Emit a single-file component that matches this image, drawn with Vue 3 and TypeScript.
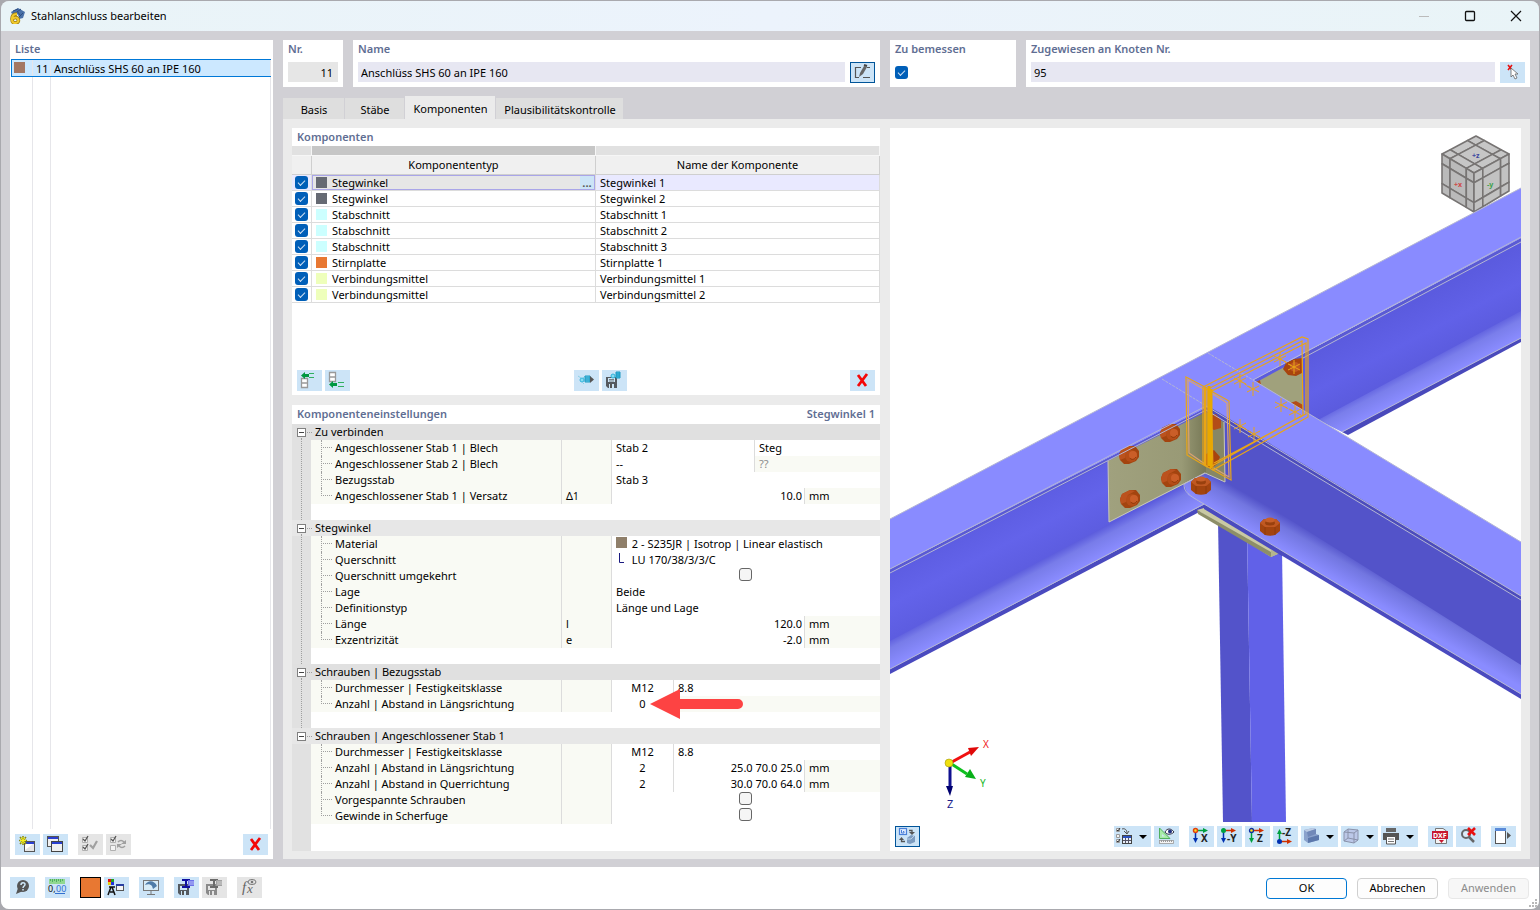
<script setup lang="ts">
import { ref } from 'vue'

type Point = [number, number]

interface Component {
  type: string
  name: string
  color: string
  on: boolean
}

interface Cell {
  text?: string
  kind: 'text' | 'half' | 'count' | 'number' | 'unit' | 'check' | 'muted' | 'fill' | 'section'
  swatch?: string
}

interface Row {
  label: string
  symbol?: string
  sub?: string
  cells: Cell[]
  arrow?: boolean
}

interface Group {
  title: string
  rows: Row[]
}

const tabs = ['Basis', 'Stäbe', 'Komponenten', 'Plausibilitätskontrolle']
const activeTab = ref('Komponenten')
const connectionName = ref('Anschlüss SHS 60 an IPE 160')
const nodes = ref('95')
const designed = ref(true)

const components = ref<Component[]>([
  { type: 'Stegwinkel', name: 'Stegwinkel 1', color: '#666a73', on: true },
  { type: 'Stegwinkel', name: 'Stegwinkel 2', color: '#666a73', on: true },
  { type: 'Stabschnitt', name: 'Stabschnitt 1', color: '#ccffff', on: true },
  { type: 'Stabschnitt', name: 'Stabschnitt 2', color: '#ccffff', on: true },
  { type: 'Stabschnitt', name: 'Stabschnitt 3', color: '#ccffff', on: true },
  { type: 'Stirnplatte', name: 'Stirnplatte 1', color: '#e87832', on: true },
  { type: 'Verbindungsmittel', name: 'Verbindungsmittel 1', color: '#eeffbb', on: true },
  { type: 'Verbindungsmittel', name: 'Verbindungsmittel 2', color: '#eeffbb', on: true },
])

const groups: Group[] = [
  {
    title: 'Zu verbinden',
    rows: [
      { label: 'Angeschlossener Stab 1 | Blech', cells: [{ text: 'Stab 2', kind: 'half' }, { text: 'Steg', kind: 'text' }] },
      { label: 'Angeschlossener Stab 2 | Blech', cells: [{ text: '--', kind: 'half' }, { text: '??', kind: 'muted' }] },
      { label: 'Bezugsstab', cells: [{ text: 'Stab 3', kind: 'text' }] },
      { label: 'Angeschlossener Stab 1 | Versatz', symbol: 'Δ', sub: '1', cells: [{ text: '10.0', kind: 'number' }, { text: 'mm', kind: 'unit' }] },
    ],
  },
  {
    title: 'Stegwinkel',
    rows: [
      { label: 'Material', cells: [{ text: '2 - S235JR | Isotrop | Linear elastisch', kind: 'text', swatch: '#8f7f6a' }] },
      { label: 'Querschnitt', cells: [{ text: 'LU 170/38/3/3/C', kind: 'section' }] },
      { label: 'Querschnitt umgekehrt', cells: [{ kind: 'check' }] },
      { label: 'Lage', cells: [{ text: 'Beide', kind: 'text' }] },
      { label: 'Definitionstyp', cells: [{ text: 'Länge und Lage', kind: 'text' }] },
      { label: 'Länge', symbol: 'l', cells: [{ text: '120.0', kind: 'number' }, { text: 'mm', kind: 'unit' }] },
      { label: 'Exzentrizität', symbol: 'e', cells: [{ text: '-2.0', kind: 'number' }, { text: 'mm', kind: 'unit' }] },
    ],
  },
  {
    title: 'Schrauben | Bezugsstab',
    rows: [
      { label: 'Durchmesser | Festigkeitsklasse', cells: [{ text: 'M12', kind: 'count' }, { text: '8.8', kind: 'text' }] },
      { label: 'Anzahl | Abstand in Längsrichtung', cells: [{ text: '0', kind: 'count' }, { kind: 'fill' }], arrow: true },
    ],
  },
  {
    title: 'Schrauben | Angeschlossener Stab 1',
    rows: [
      { label: 'Durchmesser | Festigkeitsklasse', cells: [{ text: 'M12', kind: 'count' }, { text: '8.8', kind: 'text' }] },
      { label: 'Anzahl | Abstand in Längsrichtung', cells: [{ text: '2', kind: 'count' }, { text: '25.0 70.0 25.0', kind: 'number' }, { text: 'mm', kind: 'unit' }] },
      { label: 'Anzahl | Abstand in Querrichtung', cells: [{ text: '2', kind: 'count' }, { text: '30.0 70.0 64.0', kind: 'number' }, { text: 'mm', kind: 'unit' }] },
      { label: 'Vorgespannte Schrauben', cells: [{ kind: 'check' }] },
      { label: 'Gewinde in Scherfuge', cells: [{ kind: 'check' }] },
    ],
  },
]

const viewTools = [
  { icon: 'i-options', label: 'Anzeigeoptionen', menu: true, gap: false },
  { icon: 'i-measure', label: 'Bemaßung anzeigen', menu: false, gap: false },
  { icon: 'i-viewx', label: 'Ansicht in X', menu: false, gap: true },
  { icon: 'i-viewy', label: 'Ansicht in -Y', menu: false, gap: false },
  { icon: 'i-viewz', label: 'Ansicht in Z', menu: false, gap: false },
  { icon: 'i-viewmz', label: 'Ansicht in -Z', menu: false, gap: false },
  { icon: 'i-solid', label: 'Darstellung', menu: true, gap: false },
  { icon: 'i-wire', label: 'Drahtmodell', menu: true, gap: false },
  { icon: 'i-print', label: 'Drucken', menu: true, gap: false },
  { icon: 'i-dxf', label: 'DXF-Export', menu: false, gap: true },
  { icon: 'i-find', label: 'Auswahl aufheben', menu: false, gap: false },
  { icon: 'i-panel', label: 'Seitenleiste', menu: false, gap: true },
]

const cuts = [0, 0.25, 0.76, 1]

function face(o: Point, a: Point, b: Point, c: Point): string[] {
  const at = (u: number, v: number): string => {
    const x = o[0] * (1 - u) * (1 - v) + a[0] * u * (1 - v) + b[0] * (1 - u) * v + c[0] * u * v
    const y = o[1] * (1 - u) * (1 - v) + a[1] * u * (1 - v) + b[1] * (1 - u) * v + c[1] * u * v
    return `${x.toFixed(1)},${y.toFixed(1)}`
  }
  const cells: string[] = []
  for (let i = 0; i < 3; i++) {
    for (let j = 0; j < 3; j++) {
      cells.push([at(cuts[i], cuts[j]), at(cuts[i + 1], cuts[j]), at(cuts[i + 1], cuts[j + 1]), at(cuts[i], cuts[j + 1])].join(' '))
    }
  }
  return cells
}

const cubeFaces = [
  { fill: '#c6c6c6', cells: face([1476, 136], [1509, 154], [1442, 154], [1474, 173]) },
  { fill: '#bababa', cells: face([1442, 154], [1474, 173], [1442, 193], [1474, 212]) },
  { fill: '#c2c2c2', cells: face([1474, 173], [1509, 154], [1474, 212], [1509, 191]) },
]

const sideBolts: Point[] = [[1129, 455], [1170, 433], [1130, 499], [1171, 478]]
const topBolts: Point[] = [[1201, 486], [1270, 527]]
const crosses: Point[] = [[1240, 381], [1253, 389], [1280, 359], [1294, 367], [1240, 426], [1254, 434], [1281, 405], [1295, 412]]
</script>

<template>
  <div class="desk">
    <svg class="sprites" aria-hidden="true">
      <defs>
        <symbol id="i-logo" viewBox="0 0 16 16">
          <path d="M2 4 L9 0 L16 4 L14 10 L10 11 C10 6 7 4 3 6 Z" fill="#4a71a8" />
          <path d="M4 3 L9 1 M10 9 L14 5 M8 4 L12 1 M11 7 L8 3" stroke="#2c4d80" fill="none" />
          <path d="M8 6C4 6 3 8 3 11C3 14 4 15 6 15C9 15 10 13 9 11C8 9 5 9 4 11" fill="none" stroke="#9a7a10" stroke-width="3.600" />
          <path d="M8 6C4 6 3 8 3 11C3 14 4 15 6 15C9 15 10 13 9 11C8 9 5 9 4 11" fill="none" stroke="#f0c92c" stroke-width="2.200" />
        </symbol>
        <symbol id="i-new" viewBox="0 0 25 21">
          <rect x="9.500" y="7.500" width="10" height="10" fill="#e6e6e6" stroke="#555" />
          <path d="M10 8H19V10H10Z" fill="#2a3fd0" />
          <path d="M10 10H18L10 16Z" fill="#fff" />
          <path d="M8 2V11M4 6.500H12M5 3L11 10M11 3L5 10" stroke="#8a8a10" stroke-width="1.600" />
          <path d="M8 3V10M5 6.500H11M6 4L10 9M10 4L6 9" stroke="#f5f020" />
        </symbol>
        <symbol id="i-copy" viewBox="0 0 25 21">
          <rect x="4.500" y="2.500" width="11" height="10" fill="#f0f0f0" stroke="#555" />
          <path d="M5 3H15V5H5Z" fill="#2a3fd0" />
          <rect x="8.500" y="7.500" width="11" height="10" fill="#f0f0f0" stroke="#444" />
          <path d="M9 8H19V10H9Z" fill="#2a3fd0" />
        </symbol>
        <symbol id="i-checks" viewBox="0 0 25 21">
          <path d="M4.500 3.500H9.500V8.500H4.500ZM4.500 11.500H9.500V16.500H4.500Z" fill="#f4f4f4" stroke="#b0b0b0" />
          <path d="M5 5L7 7L10 2M5 13L7 15L10 10" fill="none" stroke="#555" stroke-width="1.300" />
          <path d="M12 11L15 14L19 7" fill="none" stroke="#a0a0a0" stroke-width="2.200" />
        </symbol>
        <symbol id="i-swap" viewBox="0 0 25 21">
          <path d="M4.500 3.500H9.500V8.500H4.500ZM4.500 11.500H9.500V16.500H4.500Z" fill="#f4f4f4" stroke="#b0b0b0" />
          <path d="M5 5L7 7L10 2" fill="none" stroke="#555" stroke-width="1.300" />
          <path d="M12 8C14 6 16 6 18 8" fill="none" stroke="#a0a0a0" stroke-width="1.600" /><path d="M20 6V10H15Z" fill="#a0a0a0" />
          <path d="M19 12C17 14 15 14 13 12" fill="none" stroke="#a0a0a0" stroke-width="1.600" /><path d="M11 14V10H16Z" fill="#a0a0a0" />
        </symbol>
        <symbol id="i-delete" viewBox="0 0 25 21">
          <path d="M8 5L16 16M17 4L8 16" fill="none" stroke="#f40808" stroke-width="2.800" />
        </symbol>
        <symbol id="i-up" viewBox="0 0 25 21">
          <path d="M4.500 8.500H10.500V13H4.500ZM4.500 13H10.500V17.500H4.500Z" fill="#fff" stroke="#999" stroke-width="1.300" />
          <path d="M4 5.500L8 2V4H12V7H8V9Z" fill="#009840" />
          <path d="M12 3.500H17M12 7.500H17" stroke="#30b060" />
        </symbol>
        <symbol id="i-down" viewBox="0 0 25 21">
          <path d="M4.500 2.500H10.500V7H4.500ZM4.500 7H10.500V11.500H4.500Z" fill="#fff" stroke="#999" stroke-width="1.300" />
          <path d="M4 14.500L8 11V13H12V16H8V18Z" fill="#009840" />
          <path d="M13 12.500H19M13 16.500H19" stroke="#30b060" />
        </symbol>
        <symbol id="i-import" viewBox="0 0 25 21">
          <circle cx="8" cy="10" r="2" fill="#8adcf2" stroke="#30b4dc" />
          <path d="M4 6L7 8M10 14L8 12M9 8L11 6" stroke="#8ccfe6" />
          <path d="M11 6H16V12H11ZM11 8H16M11 10H16" fill="#5cc8ea" stroke="#1e98c0" />
          <path d="M16 6L20 9.500L16 13Z" fill="#555" />
        </symbol>
        <symbol id="i-saveplus" viewBox="0 0 25 21">
          <path d="M4 7H15V18H6L4 16Z" fill="#555a60" />
          <rect x="6" y="8" width="7" height="4" fill="#cde6f7" />
          <path d="M7 9.500H12M7 11H12" stroke="#555" stroke-width=".7" />
          <rect x="7" y="14" width="5" height="4" fill="#cde6f7" />
          <rect x="8" y="14" width="2" height="4" fill="#555" />
          <circle cx="11" cy="6" r="2" fill="#8adcf2" stroke="#30b4dc" />
          <path d="M14 2H18V8H14ZM14 4H18M14 6H18" fill="#3dbce4" stroke="#1e98c0" />
        </symbol>
        <symbol id="i-edit" viewBox="0 0 25 21">
          <path d="M11 5.500H5.500V15.500H9M17 5.500H20M13 15.500H20" fill="none" stroke="#555" stroke-width="1.200" />
          <path d="M9 15L10 11L14 4L17 5L13 12Z" fill="#666" />
          <path d="M14 3L17 4" stroke="#444" stroke-width="2" />
        </symbol>
        <symbol id="i-pick" viewBox="0 0 25 21">
          <path d="M8 3L12 8M12 3L8 8" stroke="#e81010" stroke-width="1.600" />
          <path d="M11 6V15L13 13L15 17L17 16L15 12H18Z" fill="#fff" stroke="#666" stroke-width=".8" />
        </symbol>
        <symbol id="i-help" viewBox="0 0 25 21">
          <circle cx="13" cy="9" r="6" fill="#555" />
          <path d="M8 11L6 17L13 14Z" fill="#555" />
          <path d="M11 8C11 5 15 5 15 7.500C15 9 13 9 13 11M13 12V13.500" fill="none" stroke="#cde6f7" stroke-width="1.500" />
        </symbol>
        <symbol id="i-decimals" viewBox="0 0 25 21">
          <rect x="4" y="2" width="16" height="5" fill="#90d890" />
          <path d="M5.500 2V4M7.500 2V5M9.500 2V4M11.500 2V5M13.500 2V4M15.500 2V5M17.500 2V4" stroke="#50b060" />
          <text x="3" y="15" class="glyph" font-size="9" fill="#111">0,</text>
          <text x="11" y="15" class="glyph" font-size="9" fill="#3070d0">00</text>
          <path d="M10 16.500H20" stroke="#3070d0" />
        </symbol>
        <symbol id="i-colors" viewBox="0 0 25 21">
          <path d="M4 2H7V5H4Z" fill="#e01010" /><path d="M7 2H10V5H7Z" fill="#20a020" />
          <path d="M4 5H7V8H4Z" fill="#e8d010" /><path d="M7 5H10V8H7Z" fill="#2030e0" />
          <path d="M4 18L7 10H8L11 18M6 15H10M11 10H5" fill="none" stroke="#111" stroke-width="1.500" />
          <rect x="12.500" y="7.500" width="7" height="6" fill="#f4f4f4" stroke="#555" />
          <path d="M12 7H20V9H12Z" fill="#2a3fa0" />
        </symbol>
        <symbol id="i-monitor" viewBox="0 0 25 21">
          <rect x="4.500" y="3.500" width="15" height="10" fill="#d8ecf8" stroke="#777" />
          <path d="M6 8C9 3 15 3 18 9L14 12L13 9C11 7 9 7 6 8Z" fill="#4f7ba8" />
          <path d="M12 14V17M8 17.500H16" stroke="#777" />
        </symbol>
        <symbol id="i-savesec" viewBox="0 0 25 21">
          <path d="M4 7H15V18H6L4 16Z" fill="#555a60" />
          <rect x="6" y="9" width="7" height="4" fill="#cde6f7" />
          <rect x="7" y="14" width="5" height="4" fill="#cde6f7" />
          <rect x="8" y="14" width="2" height="4" fill="#555" />
          <path d="M8 3H16M12 3V10M8 10H16" fill="none" stroke="#1010a0" stroke-width="2" />
          <path d="M14 3H20V9H14Z" fill="#6a70e8" /><path d="M15 5H20M15 7H20" stroke="#cfd4ff" stroke-width=".8" />
        </symbol>
        <symbol id="i-savesecoff" viewBox="0 0 25 21">
          <path d="M4 7H15V18H6L4 16Z" fill="#8a8a8a" />
          <rect x="6" y="9" width="7" height="4" fill="#e4e4e4" />
          <rect x="7" y="14" width="5" height="4" fill="#e4e4e4" />
          <rect x="8" y="14" width="2" height="4" fill="#888" />
          <path d="M8 3H16M12 3V10M8 10H16" fill="none" stroke="#6a6a6a" stroke-width="2" />
          <path d="M14 3H20V9H14Z" fill="#a0a0a0" /><path d="M15 5H20M15 7H20" stroke="#ddd" stroke-width=".8" />
        </symbol>
        <symbol id="i-formula" viewBox="0 0 25 21">
          <text x="5" y="15" class="serif" font-size="15" fill="#666">f</text>
          <text x="10" y="16" class="serif" font-size="13" fill="#666">x</text>
          <ellipse cx="15" cy="5" rx="4" ry="2.500" fill="none" stroke="#777" />
          <circle cx="15" cy="5" r="1.300" fill="#777" />
        </symbol>
        <symbol id="i-sync" viewBox="0 0 25 21">
          <rect x="4.500" y="2.500" width="7" height="6" fill="#e0ecff" stroke="#4a80d8" stroke-width="1.200" />
          <path d="M6.500 4V7H9V5.500H8" fill="none" stroke="#4a80d8" />
          <path d="M14 4.500H17V6" fill="none" stroke="#555" stroke-width="1.300" /><path d="M14 6H20L17 9Z" fill="#555" />
          <path d="M10 15.500H6.500V14" fill="none" stroke="#555" stroke-width="1.300" /><path d="M4 14H9L6.500 11Z" fill="#555" />
          <path d="M12 12L16 9L20 10V16L15 18L12 17Z" fill="#7d9cc0" />
          <path d="M12 13H16L19 10" fill="none" stroke="#bcd0e4" />
        </symbol>
        <symbol id="i-options" viewBox="0 0 25 21">
          <path d="M2.500 2.500H5.500V5.500H2.500ZM2.500 8.500H5.500V11.500H2.500ZM2.500 13.500H5.500V16.500H2.500Z" fill="#f4f4f4" stroke="#999" />
          <path d="M3 4L4 5L6 2M3 15L4 16L6 13" fill="none" stroke="#333" />
          <path d="M8 3C11 2 13 4 13 7M10 5L13 8L15 5" fill="none" stroke="#555" />
          <rect x="8.500" y="9.500" width="9" height="8" fill="#e8eef8" stroke="#444" />
          <path d="M9 10H17V12H9Z" fill="#2a50c0" /><path d="M9 14.500H17M11.500 12V17M14.500 12V17" stroke="#556" />
        </symbol>
        <symbol id="i-measure" viewBox="0 0 25 21">
          <path d="M5.500 2V12.500H16Z" fill="#a8eca8" stroke="#50b060" /><path d="M8 8V10.500H11Z" fill="#cde6f7" />
          <rect x="5.500" y="14.500" width="14" height="3" fill="#f4f4f4" stroke="#999" stroke-width=".8" />
          <path d="M7.500 14V16M9.500 14V16M11.500 14V16M13.500 14V16M15.500 14V16M17.500 14V16" stroke="#999" />
          <path d="M11 6C13 2 17 2 20 6C17 9 13 9 11 6Z" fill="#fff" stroke="#334" /><circle cx="16" cy="5.500" r="2" fill="#203080" />
        </symbol>
        <symbol id="i-viewx" viewBox="0 0 25 21">
          <path d="M8 4.500H15" stroke="#00a040" stroke-width="1.500" /><path d="M14 2L19 4.500L14 7Z" fill="#00a040" />
          <path d="M6.500 6V14" stroke="#0030b0" stroke-width="1.500" /><path d="M4 12L6.500 17L9 12Z" fill="#0030b0" />
          <circle cx="6.500" cy="4.500" r="2" fill="#ffe020" stroke="#e04010" stroke-width="1.500" />
          <text x="12" y="16" class="glyph strong" font-size="10" fill="#222">X</text>
        </symbol>
        <symbol id="i-viewy" viewBox="0 0 25 21">
          <path d="M8 4.500H15" stroke="#d03000" stroke-width="1.500" /><path d="M14 2L19 4.500L14 7Z" fill="#d03000" />
          <path d="M6.500 6V14" stroke="#0030b0" stroke-width="1.500" /><path d="M4 12L6.500 17L9 12Z" fill="#0030b0" />
          <circle cx="6.500" cy="4.500" r="2.500" fill="#00a040" />
          <text x="10" y="16" class="glyph strong" font-size="10" fill="#222">-Y</text>
        </symbol>
        <symbol id="i-viewz" viewBox="0 0 25 21">
          <path d="M8 4.500H15" stroke="#d03000" stroke-width="1.500" /><path d="M14 2L19 4.500L14 7Z" fill="#d03000" />
          <path d="M6.500 6V14" stroke="#00a040" stroke-width="1.500" /><path d="M4 12L6.500 17L9 12Z" fill="#00a040" />
          <circle cx="6.500" cy="4.500" r="2" fill="#ffe020" stroke="#1030a0" stroke-width="1.300" />
          <text x="12" y="16" class="glyph strong" font-size="10" fill="#222">Z</text>
        </symbol>
        <symbol id="i-viewmz" viewBox="0 0 25 21">
          <path d="M8 15.500H15" stroke="#d03000" stroke-width="1.500" /><path d="M14 13L19 15.500L14 18Z" fill="#d03000" />
          <path d="M6.500 5V14" stroke="#00a040" stroke-width="1.500" /><path d="M4 8L6.500 3L9 8Z" fill="#00a040" />
          <circle cx="6.500" cy="15.500" r="2.500" fill="#0030b0" />
          <text x="9" y="10" class="glyph strong" font-size="10" fill="#222">-Z</text>
        </symbol>
        <symbol id="i-solid" viewBox="0 0 25 21">
          <path d="M3 4L12 2L15 3V8L18 9V14L7 17L3 14Z" fill="#8aa2cc" />
          <path d="M3 4L12 2L15 3L6 6Z" fill="#bccce4" /><path d="M7 12L18 9V14L7 17Z" fill="#5c78ac" /><path d="M6 6L15 3V8L7 11Z" fill="#7088b8" />
        </symbol>
        <symbol id="i-wire" viewBox="0 0 25 21">
          <path d="M3 6L7 3L17 4V14L13 17L3 15Z" fill="#bcc8e8" stroke="#8a92aa" />
          <path d="M3 6L13 7L17 4M13 7V17M7 3V12L3 15M7 12L17 14" fill="none" stroke="#8a92aa" />
        </symbol>
        <symbol id="i-print" viewBox="0 0 25 21">
          <path d="M5 2H15V6H5Z" fill="#666" /><path d="M2 7H18V14H2Z" fill="#555" />
          <path d="M5.500 10.500H14.500V18H5.500Z" fill="#fff" stroke="#555" /><path d="M7 13H13M7 15.500H13" stroke="#777" />
        </symbol>
        <symbol id="i-dxf" viewBox="0 0 25 21">
          <path d="M7.500 2.500H15L18.500 5V17.500H7.500Z" fill="#f4f4f4" stroke="#777" />
          <rect x="4" y="5" width="16" height="8" fill="#c81830" />
          <text x="5" y="12" class="glyph strong" font-size="7" fill="#fff">DXF</text>
          <path d="M11 14H16L13.500 17Z" fill="#c81830" />
        </symbol>
        <symbol id="i-find" viewBox="0 0 25 21">
          <circle cx="10" cy="8" r="4" fill="#dcecf8" stroke="#666" stroke-width="2" />
          <path d="M13 11L18 16" stroke="#666" stroke-width="2.500" />
          <path d="M12 2L19 9M19 2L12 9" stroke="#e81010" stroke-width="2.600" />
        </symbol>
        <symbol id="i-panel" viewBox="0 0 25 21">
          <rect x="4.500" y="2.500" width="10" height="15" fill="#fff" stroke="#555" />
          <path d="M4 2H15V5H4Z" fill="#5a8ad8" /><path d="M16 6L20 9.500L16 13Z" fill="#555" />
        </symbol>
      </defs>
    </svg>

    <main class="window">
      <header class="titlebar">
        <svg class="logo"><use href="#i-logo" /></svg>
        <h1>Stahlanschluss bearbeiten</h1>
        <div class="winbuttons">
          <button type="button" aria-label="Minimieren" disabled><svg viewBox="0 0 12 12"><path d="M1 6.500H11" stroke="#bbb" /></svg></button>
          <button type="button" aria-label="Maximieren"><svg viewBox="0 0 12 12"><rect x="1.500" y="1.500" width="9" height="9" rx="1" fill="none" stroke="#111" stroke-width="1.300" /></svg></button>
          <button type="button" aria-label="Schließen"><svg viewBox="0 0 12 12"><path d="M1 1L11 11M11 1L1 11" stroke="#111" stroke-width="1.200" /></svg></button>
        </div>
      </header>

      <div class="body">
        <aside class="list panel">
          <h2>Liste</h2>
          <div class="listbox">
            <button type="button" class="listrow">
              <span class="lc swatchcell"><i class="brown"></i></span><span class="lc num">11</span><span class="lc text">Anschlüss SHS 60 an IPE 160</span>
            </button>
            <div class="listfill"><span></span><span></span><span></span></div>
          </div>
          <div class="tools">
            <button type="button" class="tool" aria-label="Neu"><svg><use href="#i-new" /></svg></button>
            <button type="button" class="tool" aria-label="Kopieren"><svg><use href="#i-copy" /></svg></button>
            <button type="button" class="tool off gap" aria-label="Alle auswählen" disabled><svg><use href="#i-checks" /></svg></button>
            <button type="button" class="tool off" aria-label="Auswahl umkehren" disabled><svg><use href="#i-swap" /></svg></button>
            <button type="button" class="tool push" aria-label="Löschen"><svg><use href="#i-delete" /></svg></button>
          </div>
        </aside>

        <section class="main">
          <div class="split toprow">
            <div class="pair">
              <div class="panel nr">
                <label for="f-nr">Nr.</label>
                <input id="f-nr" type="text" value="11" readonly />
              </div>
              <div class="panel grow">
                <label for="f-name">Name</label>
                <div class="fieldrow">
                  <input id="f-name" v-model="connectionName" type="text" />
                  <button type="button" class="tool framed" aria-label="Name bearbeiten"><svg><use href="#i-edit" /></svg></button>
                </div>
              </div>
            </div>
            <div class="pair">
              <div class="panel design">
                <label for="f-design">Zu bemessen</label>
                <input id="f-design" v-model="designed" type="checkbox" class="tick" />
              </div>
              <div class="panel grow">
                <label for="f-nodes">Zugewiesen an Knoten Nr.</label>
                <div class="fieldrow">
                  <input id="f-nodes" v-model="nodes" type="text" />
                  <button type="button" class="tool" aria-label="Knoten wählen"><svg><use href="#i-pick" /></svg></button>
                </div>
              </div>
            </div>
          </div>

          <nav class="tabs" role="tablist">
            <button v-for="t in tabs" :key="t" type="button" role="tab" :aria-selected="t === activeTab" :class="['tab', { active: t === activeTab }]" @click="activeTab = t">{{ t }}</button>
          </nav>

          <div class="content split">
            <div class="column">
              <div class="panel comps">
                <h2>Komponenten</h2>
                <table>
                  <colgroup><col class="ckcol" /><col /><col /></colgroup>
                  <thead>
                    <tr class="band"><td></td><td class="dark"></td><td></td></tr>
                    <tr><th></th><th>Komponententyp</th><th>Name der Komponente</th></tr>
                  </thead>
                  <tbody>
                    <tr v-for="(c, i) in components" :key="c.name" :class="{ current: i === 0 }">
                      <td class="ck"><input v-model="c.on" type="checkbox" class="tick" :aria-label="c.name" /></td>
                      <td class="type">
                        <div class="typebox">
                          <i :style="{ background: c.color }"></i><span>{{ c.type }}</span>
                          <button v-if="i === 0" type="button" class="more" aria-label="Typ wählen">...</button>
                        </div>
                      </td>
                      <td class="cname">{{ c.name }}</td>
                    </tr>
                  </tbody>
                </table>
                <div class="tools bottom">
                  <button type="button" class="tool" aria-label="Davor einfügen"><svg><use href="#i-up" /></svg></button>
                  <button type="button" class="tool" aria-label="Danach einfügen"><svg><use href="#i-down" /></svg></button>
                  <span class="mid">
                    <button type="button" class="tool" aria-label="Importieren"><svg><use href="#i-import" /></svg></button>
                    <button type="button" class="tool" aria-label="Speichern"><svg><use href="#i-saveplus" /></svg></button>
                  </span>
                  <button type="button" class="tool" aria-label="Löschen"><svg><use href="#i-delete" /></svg></button>
                </div>
              </div>

              <div class="panel settings">
                <h2><span>Komponenteneinstellungen</span><span>Stegwinkel 1</span></h2>
                <div class="tree">
                  <section v-for="(g, gi) in groups" :key="g.title" class="group">
                    <div :class="['ghead', { alt: gi % 2 === 1 }]">
                      <button type="button" class="toggle" :aria-label="g.title"></button><span>{{ g.title }}</span>
                    </div>
                    <div class="gbody">
                      <div v-for="r in g.rows" :key="r.label" class="row">
                        <div class="label">{{ r.label }}</div>
                        <div class="sym">{{ r.symbol }}<small v-if="r.sub">{{ r.sub }}</small></div>
                        <div class="vals">
                          <div v-for="(c, ci) in r.cells" :key="ci" :class="['cell', c.kind]">
                            <input v-if="c.kind === 'check'" type="checkbox" class="box" :aria-label="r.label" />
                            <template v-else>
                              <i v-if="c.swatch" :style="{ background: c.swatch }"></i>
                              <svg v-if="c.kind === 'section'" class="lsec" viewBox="0 0 11 11"><path d="M3.500 0V9.500H8" fill="none" stroke="#1a1a80" /></svg>
                              {{ c.text }}
                            </template>
                          </div>
                          <svg v-if="r.arrow" class="arrow" viewBox="0 0 93 30" aria-hidden="true">
                            <path d="M0 15L30 0V10H88A5 5 0 0 1 88 20H30V30Z" fill="#fd4343" />
                          </svg>
                        </div>
                      </div>
                    </div>
                  </section>
                </div>
              </div>
            </div>

            <div class="panel view">
              <svg class="scene" viewBox="890 128 631 694" preserveAspectRatio="xMidYMid slice" role="img" aria-label="3D-Modell">
                <defs>
                  <linearGradient id="gWebA" gradientUnits="userSpaceOnUse" x1="1000" y1="514" x2="1034" y2="578">
                    <stop offset="0" stop-color="#5d5de2" /><stop offset=".4" stop-color="#6363ea" /><stop offset="1" stop-color="#5a5adc" />
                  </linearGradient>
                  <linearGradient id="gFlA" gradientUnits="userSpaceOnUse" x1="890" y1="638" x2="902" y2="661">
                    <stop offset="0" stop-color="#5a5adc" /><stop offset=".35" stop-color="#787ce9" /><stop offset="1" stop-color="#8a8cff" />
                  </linearGradient>
                  <linearGradient id="gWebR" gradientUnits="userSpaceOnUse" x1="1430" y1="294" x2="1460" y2="351">
                    <stop offset="0" stop-color="#5b5bdf" /><stop offset=".5" stop-color="#6161e8" /><stop offset="1" stop-color="#5a5adc" />
                  </linearGradient>
                  <linearGradient id="gFlR" gradientUnits="userSpaceOnUse" x1="1521" y1="308" x2="1533" y2="331">
                    <stop offset="0" stop-color="#5a5adc" /><stop offset=".4" stop-color="#7a7eeb" /><stop offset="1" stop-color="#8a8cff" />
                  </linearGradient>
                  <linearGradient id="gFlB" gradientUnits="userSpaceOnUse" x1="1375" y1="568" x2="1360" y2="594">
                    <stop offset="0" stop-color="#5353c9" /><stop offset=".35" stop-color="#7276e0" /><stop offset="1" stop-color="#8a8cff" />
                  </linearGradient>
                  <linearGradient id="gPlate" x1="0" y1="0" x2="1" y2="0">
                    <stop offset="0" stop-color="#a0a17e" /><stop offset=".75" stop-color="#999a76" /><stop offset="1" stop-color="#777856" />
                  </linearGradient>
                  <g id="sideBolt">
                    <path d="M-10 0L-8 -5L0 -9L6 -9L10 -4V2L7 6L0 9L-5 9L-9 5Z" fill="#a3440f" />
                    <path d="M-10 0L-8 -5L0 -9L5 -8L-2 -4L-4 3L-9 5Z" fill="#bb521e" />
                    <circle cx="2" cy="1" r="6" fill="#b54d18" /><ellipse cx="4" cy="0" rx="4" ry="4" fill="#ca5e28" />
                    <path d="M1 3C2 5 5 5 7 2" fill="none" stroke="#8e3a0a" />
                  </g>
                  <g id="topBolt">
                    <path d="M-10 -4L-6 -8H6L10 -4V4L5 8C2 9 -2 9 -5 8L-10 4Z" fill="#a3440f" />
                    <path d="M-10 -4L-6 -8H6L10 -4L5 0H-5Z" fill="#c05822" />
                    <ellipse cx="0" cy="-4" rx="5" ry="2.500" fill="#99400e" /><ellipse cx="0" cy="-7" rx="4.500" ry="2.500" fill="#c8602a" />
                    <path d="M-5 0V8M5 0V8" stroke="#8a380a" stroke-width=".8" />
                  </g>
                </defs>

                <g stroke="#777473" stroke-width="1.600" stroke-linejoin="round">
                  <template v-for="f in cubeFaces" :key="f.fill">
                    <polygon v-for="p in f.cells" :key="p" :points="p" :fill="f.fill" />
                  </template>
                </g>
                <text x="1472" y="158" class="glyph strong" font-size="7" fill="#4048a0">+z</text>
                <text x="1454" y="187" class="glyph strong" font-size="7" fill="#d04848">+x</text>
                <text x="1487" y="187" class="glyph strong" font-size="7" fill="#38a048">-y</text>

                <path d="M1218 520L1247 530L1252 822H1223Z" fill="#5353ca" />
                <path d="M1247 530L1282 550L1286 822H1252Z" fill="#6161e8" />

                <path d="M1253 380L1521 240V314L1322 424Z" fill="url(#gWebR)" />
                <path d="M1521 311V338L1342 432L1318 420Z" fill="url(#gFlR)" />
                <path d="M1521 338V342L1348 435L1342 432Z" fill="#4949bb" />
                <path d="M1253 384L1303 357V412Z" fill="#a0a17c" />
                <path d="M1283 369L1286 363L1294 359L1302 358V373L1296 376L1288 375Z" fill="#a8440e" />
                <circle cx="1295" cy="367" r="5" fill="#c05822" />
                <path d="M1290 403L1296 401L1303 405V411Z" fill="#b34c18" />
                <path d="M1254 383L1260 380L1261 385L1259 387Z" fill="#b34c18" />

                <path d="M890 571L1205 408V476L890 646Z" fill="url(#gWebA)" />
                <path d="M890 641L1205 473V504L890 669Z" fill="url(#gFlA)" />
                <path d="M890 669L1205 504V509L890 674Z" fill="#4a4abf" />
                <path d="M1205 406L1521 599V680L1225 490L1205 472Z" fill="#5353c9" />
                <path d="M1184 484L1205 472L1225 479L1521 665V694L1204 504L1188 495Z" fill="url(#gFlB)" />
                <path d="M1204 504L1521 694V699L1204 509Z" fill="#4a4abf" />

                <path d="M890 519L1521 188V238L1253 380L1208 407L890 569Z" fill="#898bff" />
                <path d="M1162 379L1208 353L1253 380L1521 542V596L1208 407Z" fill="#898bff" />
                <path d="M890 569L1208 407V411L890 573Z" fill="#5a5ad4" />
                <path d="M1208 406L1521 596V600L1208 411Z" fill="#4c4cbc" />
                <path d="M1303 354L1521 238V242L1303 358Z" fill="#5a5ad4" />

                <path d="M1108 461L1206 412V473L1109 522Z" fill="url(#gPlate)" />
                <path d="M1206 412L1224 422L1225 482L1206 473Z" fill="#868765" />
                <path d="M1108 461L1109 522L1205 473L1225 482L1224 422" fill="none" stroke="#c8c8bc" />
                <use v-for="p in sideBolts" :key="p.join()" href="#sideBolt" :x="p[0]" :y="p[1]" />
                <path d="M1209 416L1216 414L1221 420V428L1214 430L1209 427Z" fill="#b34c18" />
                <path d="M1206 454L1214 450L1220 457L1217 464L1211 469L1206 465Z" fill="#a8440e" />

                <path d="M1197 510L1204 508L1280 553L1271 557Z" fill="#c9c9a4" />
                <path d="M1197 510L1271 552V557L1198 514Z" fill="#8d8e68" />
                <path d="M1271 550L1280 553L1271 557Z" fill="#b4b58d" />
                <path d="M1204 504L1282 551V556L1204 509Z" fill="#4a4abf" />

                <g fill="none" stroke="#b4b6d4" stroke-width="1">
                  <path d="M890 519L1521 188" />
                  <path d="M890 569L1206 406L1521 596" />
                  <path d="M890 573L1206 410L1521 600" />
                  <path d="M1253 380L1521 237M1303 358L1521 242M1253 380L1521 542" />
                  <path d="M890 669L1204 504L1521 694" />
                  <path d="M1184 484C1184 492 1188 495 1204 504M1205 473L1184 484" />
                  <path d="M1342 432L1521 338" />
                  <path d="M1162 379L1208 407M1208 353L1253 380" stroke-dasharray="3 1" />
                </g>
                <use v-for="p in topBolts" :key="p.join()" href="#topBolt" :x="p[0]" :y="p[1]" />

                <g fill="none" stroke="#e9a516" stroke-width="1.200">
                  <path d="M1186 377L1207 388V467L1187 455Z" />
                  <path d="M1188 380L1205 390V464L1189 453Z" stroke="#dba373" />
                  <path d="M1211 391L1229 401L1231 480L1213 470Z" />
                  <path d="M1213 394L1227 403L1229 477L1214 468" stroke="#dba373" />
                  <path d="M1203 387L1302 337L1308 339V417L1213 470L1203 464Z" />
                  <path d="M1206 390L1302 341L1303 415L1212 466M1208 393L1306 343V414L1214 463" />
                  <path d="M1209 386V466M1211 389V468" stroke="#e8a800" stroke-width="3" />
                  <path d="M1205 387V465" stroke-width="2" />
                  <g stroke-width="1">
                    <path v-for="p in crosses" :key="p.join()" :d="`M${p[0]} ${p[1] - 7}v14m-6 -10l12 6m0 -6l-12 6`" />
                    <path d="M1240 381L1253 389M1280 359L1294 367M1240 426L1254 434M1281 405L1295 412" stroke-dasharray="3 2" />
                  </g>
                </g>

                <path d="M950 763L970 752" stroke="#f01010" stroke-width="3" /><path d="M968 748L979 747L971 756Z" fill="#e00808" />
                <path d="M950 763L967 774" stroke="#10c020" stroke-width="3" /><path d="M970 769L976 779L965 777Z" fill="#08b018" />
                <path d="M950 763V788" stroke="#101090" stroke-width="3" /><path d="M946 786H953L950 796Z" fill="#000070" />
                <circle cx="949" cy="763" r="4" fill="#f0e010" stroke="#a09810" stroke-width=".6" />
                <text x="983" y="748" class="glyph" font-size="10" fill="#f02020">X</text>
                <text x="980" y="787" class="glyph" font-size="10" fill="#18b828">Y</text>
                <text x="947" y="808" class="glyph" font-size="11" fill="#20208a">Z</text>
              </svg>
              <div class="tools viewtools">
                <button type="button" class="tool framed" aria-label="Ansicht synchronisieren"><svg><use href="#i-sync" /></svg></button>
                <span class="push"></span>
                <button v-for="t in viewTools" :key="t.icon" type="button" :class="['tool', { menu: t.menu, gap: t.gap }]" :aria-label="t.label">
                  <svg><use :href="'#' + t.icon" /></svg><i v-if="t.menu" class="caret"></i>
                </button>
              </div>
            </div>
          </div>
        </section>
      </div>

      <footer class="footer">
        <div class="ftools">
          <button type="button" class="tool" aria-label="Hilfe"><svg><use href="#i-help" /></svg></button>
          <button type="button" class="tool gap" aria-label="Dezimalstellen"><svg><use href="#i-decimals" /></svg></button>
          <button type="button" class="colorbtn gap" aria-label="Farbe"></button>
          <button type="button" class="tool" aria-label="Farben"><svg><use href="#i-colors" /></svg></button>
          <button type="button" class="tool gap" aria-label="Anzeige"><svg><use href="#i-monitor" /></svg></button>
          <button type="button" class="tool gap" aria-label="Querschnitt speichern"><svg><use href="#i-savesec" /></svg></button>
          <button type="button" class="tool off" aria-label="Querschnitt laden" disabled><svg><use href="#i-savesecoff" /></svg></button>
          <button type="button" class="tool off gap" aria-label="Formel" disabled><svg><use href="#i-formula" /></svg></button>
        </div>
        <button type="button" class="btn primary">OK</button>
        <button type="button" class="btn">Abbrechen</button>
        <button type="button" class="btn" disabled>Anwenden</button>
        <svg class="grip" viewBox="0 0 8 8" aria-hidden="true"><path d="M6 0H8V2H6ZM3 3H5V5H3ZM6 3H8V5H6ZM0 6H2V8H0ZM3 6H5V8H3ZM6 6H8V8H6Z" fill="#b8b8b8" /></svg>
      </footer>
    </main>
  </div>
</template>

<style>
body {
  margin: 0;
  background: #a9a9ae;
}
</style>

<style scoped>
* {
  box-sizing: border-box;
}
.desk {
  display: flex;
  min-height: 100vh;
  padding: 1px;
  background: #a9a9ae;
  font-family: "Noto Sans", "Open Sans", sans-serif;
  font-size: 11px;
  line-height: 16px;
  color: #000;
}
.sprites {
  position: absolute;
  width: 0;
  height: 0;
}
.glyph {
  font-family: "Noto Sans", sans-serif;
}
.strong {
  font-weight: 700;
}
.serif {
  font-family: "Liberation Serif", serif;
  font-style: italic;
}
.window {
  flex: 1;
  display: flex;
  flex-direction: column;
  min-width: 0;
  border-radius: 8px;
  overflow: hidden;
  background: #d1d0d5;
}
button,
input {
  font: inherit;
  color: inherit;
  margin: 0;
  padding: 0;
  border: 0;
}
.titlebar {
  display: flex;
  align-items: center;
  height: 30px;
  padding-left: 8px;
  background: linear-gradient(90deg, #e9f4f7, #ecf3fc 50%, #e9f4f7);
}
.logo {
  width: 16px;
  height: 16px;
}
h1 {
  margin: 0 0 0 6px;
  font-size: 11px;
  font-weight: 400;
}
.winbuttons {
  display: flex;
  margin-left: auto;
}
.winbuttons button {
  display: flex;
  align-items: center;
  justify-content: center;
  width: 46px;
  height: 30px;
  background: none;
}
.winbuttons svg {
  width: 12px;
  height: 12px;
}
.body {
  flex: 1;
  display: flex;
  gap: 10px;
  padding: 9px 9px 8px;
}
.panel {
  background: #fff;
}
h2,
.panel > label {
  display: block;
  margin: 0;
  padding: 0 5px;
  height: 18px;
  line-height: 18px;
  font-size: 11px;
  font-weight: 600;
  color: #5f6e93;
}
.list {
  flex: 0 0 263px;
  display: flex;
  flex-direction: column;
}
.listbox {
  flex: 1;
  display: flex;
  flex-direction: column;
  margin: 1px 2px 0 1px;
}
.listrow {
  display: flex;
  height: 18px;
  background: #cce8ff;
  border: 1px solid #0078d7;
  border-right: 0;
  text-align: left;
}
.lc {
  height: 16px;
  line-height: 17px;
  border-right: 1px solid #e6e6ea;
}
.swatchcell {
  width: 21px;
  padding: 2px;
}
.brown {
  display: block;
  width: 11px;
  height: 11px;
  background: #a37764;
}
.num {
  width: 18px;
  padding-left: 3px;
}
.text {
  flex: 1;
  padding-left: 3px;
}
.listfill {
  flex: 1;
  display: flex;
}
.listfill span {
  width: 22px;
  border-right: 1px solid #e6e6ea;
}
.listfill span:nth-child(2) {
  width: 18px;
}
.listfill span:nth-child(3) {
  flex: 1;
}
.tools {
  display: flex;
  gap: 3px;
  padding: 5px 5px 4px;
}
.tool {
  display: flex;
  align-items: center;
  height: 21px;
  background: #cce4f7;
  flex: none;
}
.tool svg {
  display: block;
  width: 25px;
  height: 21px;
}
.tool.off {
  background: #e5e5e5;
}
.tool.framed {
  border: 1px solid #005499;
  width: 25px;
}
.tool.framed svg {
  margin: -1px;
}
.gap {
  margin-left: 7px;
}
.push {
  margin-left: auto;
}
.menu {
  width: 37px;
}
.caret {
  border: 4px solid transparent;
  border-top-color: #000;
  border-bottom: 0;
}
.main {
  flex: 1;
  min-width: 0;
  display: flex;
  flex-direction: column;
}
.split {
  display: grid;
  grid-template-columns: minmax(0, 597fr) minmax(0, 640fr);
  gap: 10px;
}
.toprow {
  height: 47px;
}
.pair {
  display: flex;
  gap: 10px;
}
.nr {
  width: 60px;
}
.design {
  width: 126px;
}
.grow {
  flex: 1;
}
.panel > input[type='text'] {
  display: block;
  width: 50px;
  height: 20px;
  margin: 4px 5px 0;
  padding: 1px 5px 0 0;
  background: #e6e6e6;
  text-align: right;
}
.fieldrow {
  display: flex;
  gap: 5px;
  padding: 4px 5px 0;
}
.fieldrow input {
  flex: 1;
  min-width: 0;
  height: 20px;
  padding: 1px 3px 0;
  background: #e7e7f2;
}
.tick {
  appearance: none;
  display: block;
  width: 13px;
  height: 13px;
  border-radius: 3px;
  background: #005fb8;
}
.tick:checked::after {
  content: '';
  display: block;
  width: 6px;
  height: 3px;
  margin: 4px 0 0 3px;
  border: solid #cfe0f2;
  border-width: 0 0 1px 1px;
  transform: rotate(-45deg);
}
.design .tick {
  margin: 8px 5px 0;
}
.tabs {
  display: flex;
  align-items: flex-end;
  height: 23px;
  margin-top: 9px;
}
.tab {
  height: 21px;
  padding: 2px 6px 0 7px;
  background: #dedede;
  border-right: 1px solid #d1d0d5;
}
.tab:nth-child(1) {
  width: 62px;
}
.tab:nth-child(2) {
  width: 60px;
}
.tab:nth-child(3) {
  width: 91px;
}
.tab:nth-child(4) {
  width: 128px;
}
.tab.active {
  height: 23px;
  padding-top: 3px;
  background: #ebebeb;
}
.content {
  flex: 1;
  padding: 9px 9px 8px;
  background: #ebebeb;
  grid-template-columns: minmax(0, 588fr) minmax(0, 631fr);
}
.column {
  display: flex;
  flex-direction: column;
  gap: 10px;
}
.comps {
  height: 267px;
  display: flex;
  flex-direction: column;
}
table {
  width: 100%;
  table-layout: fixed;
  border-collapse: separate;
  border-spacing: 0;
}
.ckcol {
  width: 20px;
}
td,
th {
  height: 16px;
  padding: 0;
  line-height: 15px;
  font-weight: 400;
  border-right: 1px solid #dcdcdc;
  border-bottom: 1px solid #dcdcdc;
}
.band td {
  height: 10px;
  line-height: 8px;
  background: #e1e1e1;
  border-color: #f6f6f6;
}
.band .dark {
  background: #c6c6c6;
}
th {
  height: 19px;
  line-height: 18px;
  background: #f0f0f0;
  border-color: #cfcfcf;
}
.ck {
  padding-left: 3px;
}
.typebox {
  display: flex;
  align-items: center;
  height: 15px;
  padding-left: 4px;
}
.typebox i {
  width: 11px;
  height: 11px;
  margin-right: 5px;
}
.cname {
  padding-left: 4px;
}
.current td {
  background: #e9e9ff;
}
.current .type {
  background: #e6e6e6;
}
.current .typebox {
  padding-left: 3px;
  border: 1px solid #a9a5e8;
}
.more {
  width: 14px;
  height: 13px;
  margin-left: auto;
  background: #cce4f7;
  line-height: 10px;
  color: #555;
  font-weight: 700;
}
.bottom {
  margin-top: auto;
}
.mid {
  display: flex;
  gap: 3px;
  margin: 0 auto;
}
.settings {
  flex: 1;
  display: flex;
  flex-direction: column;
}
.settings h2 {
  display: flex;
  justify-content: space-between;
  height: 19px;
}
.tree {
  flex: 1;
  background: linear-gradient(90deg, #e1e1e1 19px, #fff 19px);
}
.group {
  position: relative;
}
.group:not(:last-child)::before {
  content: '';
  position: absolute;
  left: 9px;
  top: 14px;
  bottom: -4px;
  border-left: 1px dotted #a0a0a0;
}
.ghead {
  display: flex;
  align-items: center;
  height: 16px;
  padding-left: 5px;
  background: #e0e0e0;
}
.ghead.alt {
  background: #e7e7e7;
}
.toggle {
  position: relative;
  width: 9px;
  height: 9px;
  margin-right: 9px;
  background: linear-gradient(#444, #444) center / 5px 1px no-repeat #fff;
  border: 1px solid #808080;
}
.toggle::after {
  content: '';
  position: absolute;
  left: 9px;
  top: 3px;
  width: 5px;
  border-top: 1px dotted #a0a0a0;
}
.gbody {
  padding: 0 0 16px 19px;
}
.row {
  display: flex;
  height: 16px;
}
.label {
  position: relative;
  flex: 0 0 251px;
  padding-left: 24px;
  background: #f9faf4;
  border-right: 1px solid #dcdcdc;
}
.label::before {
  content: '';
  position: absolute;
  left: 10px;
  top: 0;
  height: 100%;
  border-left: 1px dotted #a0a0a0;
}
.row:last-child .label::before {
  height: 8px;
}
.label::after {
  content: '';
  position: absolute;
  left: 10px;
  top: 7px;
  width: 11px;
  border-top: 1px dotted #a0a0a0;
}
.sym {
  flex: 0 0 50px;
  padding-left: 4px;
  background: #f9faf4;
  border-right: 1px solid #dcdcdc;
}
.sym small {
  font-size: 10px;
}
.vals {
  position: relative;
  flex: 1;
  min-width: 0;
  display: flex;
}
.cell {
  flex: 1;
  padding-left: 4px;
  white-space: nowrap;
}
.cell i {
  display: inline-block;
  width: 11px;
  height: 11px;
  margin-right: 2px;
}
.lsec {
  width: 11px;
  height: 11px;
  margin-right: 2px;
}
.half {
  flex: 0 0 143px;
  border-right: 1px solid #dcdcdc;
}
.muted {
  background: #f9faf4;
  color: #8c8c8c;
}
.fill {
  background: #f9faf4;
}
.count {
  flex: 0 0 62px;
  padding: 0;
  text-align: center;
  border-right: 1px solid #dcdcdc;
}
.number {
  text-align: right;
  padding-right: 2px;
  border-right: 1px solid #dcdcdc;
}
.unit {
  flex: 0 0 75px;
  background: #f9faf4;
}
.check {
  display: flex;
  justify-content: center;
  padding: 0 2px 0 0;
}
.box {
  appearance: none;
  width: 13px;
  height: 13px;
  border: 1px solid #666;
  border-radius: 3px;
  background: #f5f5f5;
}
.arrow {
  position: absolute;
  left: 38px;
  top: -7px;
  width: 93px;
  height: 30px;
}
.view {
  display: flex;
  flex-direction: column;
}
.scene {
  display: block;
  flex: 1 1 0;
  width: 100%;
  min-height: 400px;
}
.viewtools {
  padding-top: 4px;
}
.footer {
  position: relative;
  display: flex;
  align-items: center;
  gap: 3px;
  height: 42px;
  padding: 0 10px 0 9px;
  background: #fff;
}
.ftools {
  display: flex;
  gap: 3px;
  margin-right: auto;
  padding-bottom: 2px;
}
.colorbtn {
  width: 21px;
  height: 21px;
  background: #e87832;
  border: 1px solid #000;
}
.btn {
  width: 81px;
  height: 21px;
  margin-left: 7px;
  background: #fdfdfd;
  border: 1px solid #d0d0d0;
  border-radius: 4px;
}
.btn.primary {
  border-color: #0078d4;
}
.btn:disabled {
  color: #8c8c8c;
  background: #f7f7f7;
  border-color: #e8e8e8;
}
.grip {
  position: absolute;
  right: 2px;
  bottom: 2px;
  width: 8px;
  height: 8px;
}
</style>
